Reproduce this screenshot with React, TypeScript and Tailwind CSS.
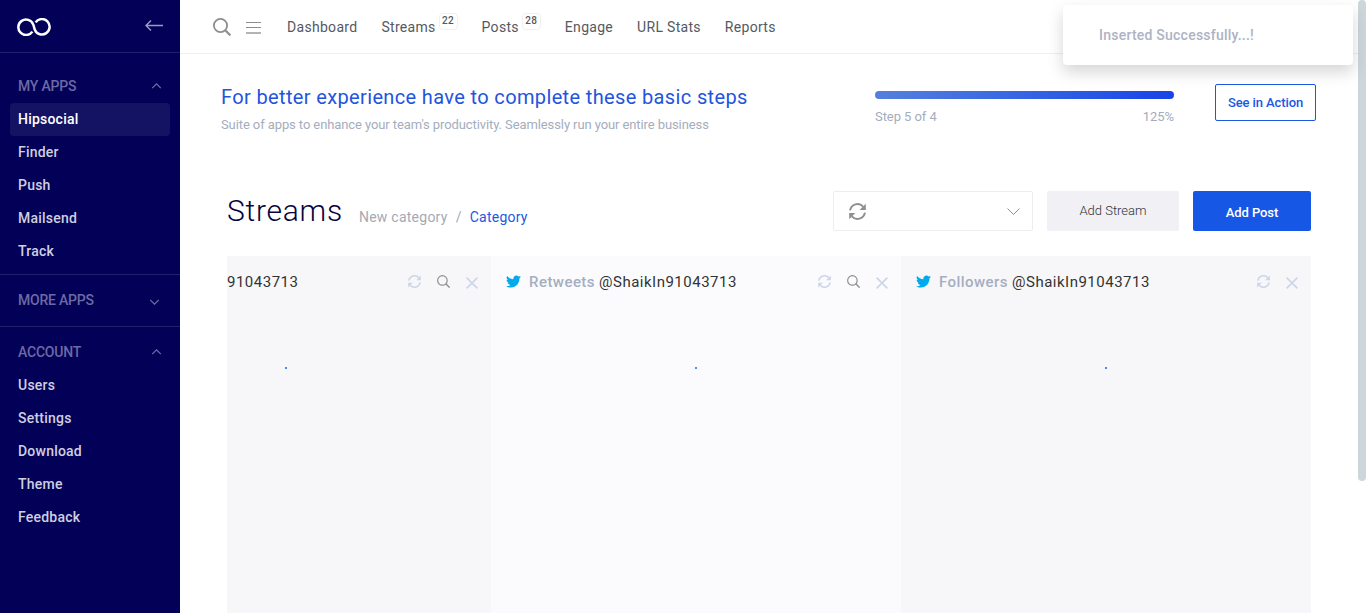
import React from "react";

const Refresh = ({ className }: { className: string }) => (
  <svg className={className} viewBox="0 0 16 16" fill="none" stroke="currentColor" strokeWidth="1.8">
    <path d="M1 7A7.1 7.1 0 0 1 13.3 3.4M15 9A7.1 7.1 0 0 1 2.7 12.6" />
    <path d="M15.8.7v5.8H10zM.2 15.3V9.5H6z" fill="currentColor" stroke="none" />
  </svg>
);

const Search = ({ className, sw }: { className: string; sw: number }) => (
  <svg className={className} viewBox="0 0 18 18" fill="none" stroke="currentColor" strokeWidth={sw}>
    <circle cx="7.5" cy="7.5" r="6.6" />
    <path d="M12.2 12.2L17.4 17.4" strokeWidth={sw * 1.2} />
  </svg>
);

const Close = () => (
  <svg className="mt-1 h-3 w-3 text-[#cdd5e8]" viewBox="0 0 12 12" fill="none" stroke="currentColor" strokeWidth="1.7">
    <path d="M.6.6l10.8 10.8M11.4.6L.6 11.4" />
  </svg>
);

const Chevron = ({ up, className }: { up?: boolean; className: string }) => (
  <svg className={className} viewBox="0 0 12 7" fill="none" stroke="currentColor" strokeWidth="1.5">
    <path d={up ? "M1 6l5-5 5 5" : "M1 1l5 5 5-5"} />
  </svg>
);

const Bird = () => (
  <svg className="h-[15px] w-[15px] shrink-0 text-[#00aaec]" viewBox="0 0 512 512" fill="currentColor">
    <path d="M459.37 151.716c.325 4.548.325 9.097.325 13.645 0 138.72-105.583 298.558-298.558 298.558-59.452 0-114.68-17.219-161.137-47.106 8.447.974 16.568 1.299 25.34 1.299 49.055 0 94.213-16.568 130.274-44.832-46.132-.975-84.792-31.188-98.112-72.772 6.498.974 12.995 1.624 19.818 1.624 9.421 0 18.843-1.3 27.614-3.573-48.081-9.747-84.143-51.98-84.143-102.985v-1.299c13.969 7.797 30.214 12.67 47.431 13.319-28.264-18.843-46.781-51.005-46.781-87.391 0-19.492 5.197-37.36 14.294-52.954 51.655 63.675 129.3 105.258 216.365 109.807-1.624-7.797-2.599-15.918-2.599-24.04 0-57.828 46.782-104.934 104.934-104.934 30.213 0 57.502 12.67 76.67 33.137 23.715-4.548 46.456-13.32 66.599-25.34-7.798 24.366-24.366 44.833-46.132 57.827 21.117-2.273 41.584-8.122 60.426-16.243-14.292 20.791-32.161 39.308-52.628 54.253z" />
  </svg>
);

const Heading = ({ label, up }: { label: string; up?: boolean }) => (
  <div className="flex h-[33px] items-center justify-between px-[18px] pb-0.5 text-sm font-medium tracking-[-0.22px] text-[#6c6aa4]">
    <span>{label}</span>
    <Chevron up={up} className={up ? "h-[6px] w-[11px]" : "mr-0.5 mt-1 h-[6px] w-[11px]"} />
  </div>
);

const Items = ({ items, active }: { items: string[]; active?: string }) => (
  <div className="px-2.5">
    {items.map((t) => (
      <div
        key={t}
        className={
          "flex h-[33px] items-center rounded-sm px-2 pb-0.5 text-sm font-medium tracking-[0.22px] " +
          (t === active ? "bg-[#141363] text-white" : "text-[#cfcfe0]")
        }
      >
        {t}
      </div>
    ))}
  </div>
);

const Stream = ({ name, user, search, bg, width }: { name?: string; user: string; search?: boolean; bg: string; width: string }) => (
  <div className={"shrink-0 " + bg + " " + width}>
    <div className={"flex h-[50px] items-center pr-[13px] " + (name ? "pl-[15px]" : "")}>
      {name && <Bird />}
      {name && <span className="ml-2 mr-1 pt-0.5 text-[15px] font-medium tracking-[0.45px] text-[#a5aec0]">{name}</span>}
      <span className="pt-0.5 text-[15px] tracking-[0.5px] text-[#333]">{user}</span>
      <div className="ml-auto flex items-center gap-4">
        <Refresh className="h-[13px] w-[13px] text-[#cdd5e8]" />
        {search && <Search sw={1.6} className="h-[13px] w-[13px] text-[#8e8e8e]" />}
        <Close />
      </div>
    </div>
    <div className={"flex pt-[61px] " + (name ? "pl-[204px]" : "pl-[58px]")}>
      <div className="h-0.5 w-0.5 bg-[#3c92f8]" />
    </div>
  </div>
);

const nav = [
  { label: "Dashboard" },
  { label: "Streams", count: 22 },
  { label: "Posts", count: 28 },
  { label: "Engage" },
  { label: "URL Stats" },
  { label: "Reports" },
];

export default function App() {
  return (
    <div className="relative flex h-[613px] w-[1366px] overflow-hidden bg-white font-[Roboto,sans-serif]">
      <aside className="w-[180px] shrink-0 bg-[#030057]">
        <div className="flex h-[53px] items-center justify-between border-b border-[#211f6c] pl-[17px] pr-[17px]">
          <svg className="mt-0.5 h-[18px] w-[34px]" viewBox="0 0 34 18" fill="none" stroke="#fff" strokeWidth="2.5">
            <path d="M15.4 13.6A7.7 7.7 0 1 1 16.1 6.2C17 8 17 10 17.9 11.9A7.7 7.7 0 1 0 18.6 4.4" />
          </svg>
          <svg className="mb-0.5 h-[11px] w-[18px]" viewBox="0 0 18 11" fill="none" stroke="#9b99c3" strokeWidth="1.4">
            <path d="M18 5.5H1M6 .6L1 5.5l5 4.9" />
          </svg>
        </div>
        <div className="pb-1.5 pt-[17px]">
          <Heading label="MY APPS" up />
          <Items items={["Hipsocial", "Finder", "Push", "Mailsend", "Track"]} active="Hipsocial" />
        </div>
        <div className="border-y border-[#211f6c] py-[9px]">
          <Heading label="MORE APPS" />
        </div>
        <div className="pt-[9px]">
          <Heading label="ACCOUNT" up />
          <Items items={["Users", "Settings", "Download", "Theme", "Feedback"]} />
        </div>
      </aside>

      <main className="w-[1178px] shrink-0">
        <header className="flex h-[54px] items-center border-b border-[#f0f0f2] pl-[33px]">
          <Search sw={1.8} className="h-[18px] w-[18px] text-[#8e8e8e]" />
          <div className="ml-[15px] mt-[3px] flex w-[15px] flex-col gap-1">
            <i className="h-px bg-[#8e8e8e]" />
            <i className="h-px bg-[#8e8e8e]" />
            <i className="h-0.5 bg-[#b4b4b4]" />
          </div>
          <nav className="ml-[26px] flex gap-6 text-sm tracking-[0.3px] text-[#55595f]">
            {nav.map((n) => (
              <div key={n.label} className="flex">
                <span>{n.label}</span>
                {n.count && (
                  <span className="-mt-1 ml-[3px] flex h-[17px] w-[19px] items-center justify-center rounded-sm border border-[#f0f0f2] text-[10px] font-medium">
                    {n.count}
                  </span>
                )}
              </div>
            ))}
          </nav>
        </header>

        <section className="flex h-[137px] pl-[41px]">
          <div className="w-[654px] pt-[29px]">
            <h2 className="text-xl leading-7 tracking-[0.36px] text-[#2354e0]">For better experience have to complete these basic steps</h2>
            <p className="mt-1 text-[13px] leading-5 tracking-[-0.094px] text-[#a5adbd]">
              Suite of apps to enhance your team's productivity. Seamlessly run your entire business
            </p>
          </div>
          <div className="w-[299px] pt-[37px]">
            <div className="h-2 rounded-full bg-linear-to-r from-[#567fdc] to-[#1b42e8]" />
            <div className="mt-2 flex justify-between text-[13px] leading-5 tracking-[-0.06px] text-[#a5adbd]">
              <span>Step 5 of 4</span>
              <span>125%</span>
            </div>
          </div>
          <button className="ml-[41px] mt-[30px] h-[37px] w-[101px] rounded-xs border border-[#1b57e4] text-[13px] font-medium tracking-[-0.1px] text-[#1b57e4]">
            See in Action
          </button>
        </section>

        <section className="ml-[47px] w-[1084px]">
          <div className="flex h-[65px] items-start">
            <h1 className="text-[30px] font-light leading-10 tracking-[0.75px] text-[#06043e]">Streams</h1>
            <div className="ml-4 mt-4 flex gap-2 text-sm leading-5 tracking-[0.25px] text-[#a5a9b5]">
              <span>New category</span>
              <span>/</span>
              <span className="text-[#2458e0]">Category</span>
            </div>
            <div className="ml-auto flex h-10 w-[200px] items-center justify-between rounded-xs border border-[#ededf0] pl-[15px] pr-3 text-[#8e8e8e]">
              <Refresh className="h-[17px] w-[17px]" />
              <svg className="h-[7px] w-[13px]" viewBox="0 0 13 7" fill="none" stroke="currentColor">
                <path d="M.5.5l6 6 6-6" />
              </svg>
            </div>
            <button className="ml-3.5 h-10 w-[132px] rounded-xs bg-[#f0f0f5] text-[13px] font-light text-[#333]">Add Stream</button>
            <button className="ml-3.5 h-10 w-[118px] rounded-xs bg-[#1757e6] pt-1 text-[13px] font-medium tracking-[-0.1px] text-white">Add Post</button>
          </div>
          <div className="flex h-[357px]">
            <Stream user="91043713" search bg="bg-[#f7f7fa]" width="w-[264px]" />
            <Stream name="Retweets" user="@ShaikIn91043713" search bg="bg-[#fbfbfd]" width="w-[410px]" />
            <Stream name="Followers" user="@ShaikIn91043713" bg="bg-[#f7f7fa]" width="w-[410px]" />
          </div>
        </section>
      </main>

      <div className="h-[481px] w-2 shrink-0 rounded bg-[#cdd6d9]" />

      <div className="absolute left-[1063px] top-[5px] flex h-[60px] w-[290px] items-center rounded bg-white pl-9 text-sm font-medium tracking-[0.23px] text-[#adb3c4] shadow-[0_7px_16px_rgba(0,0,0,0.17)]">
        Inserted Successfully...!
      </div>
    </div>
  );
}
